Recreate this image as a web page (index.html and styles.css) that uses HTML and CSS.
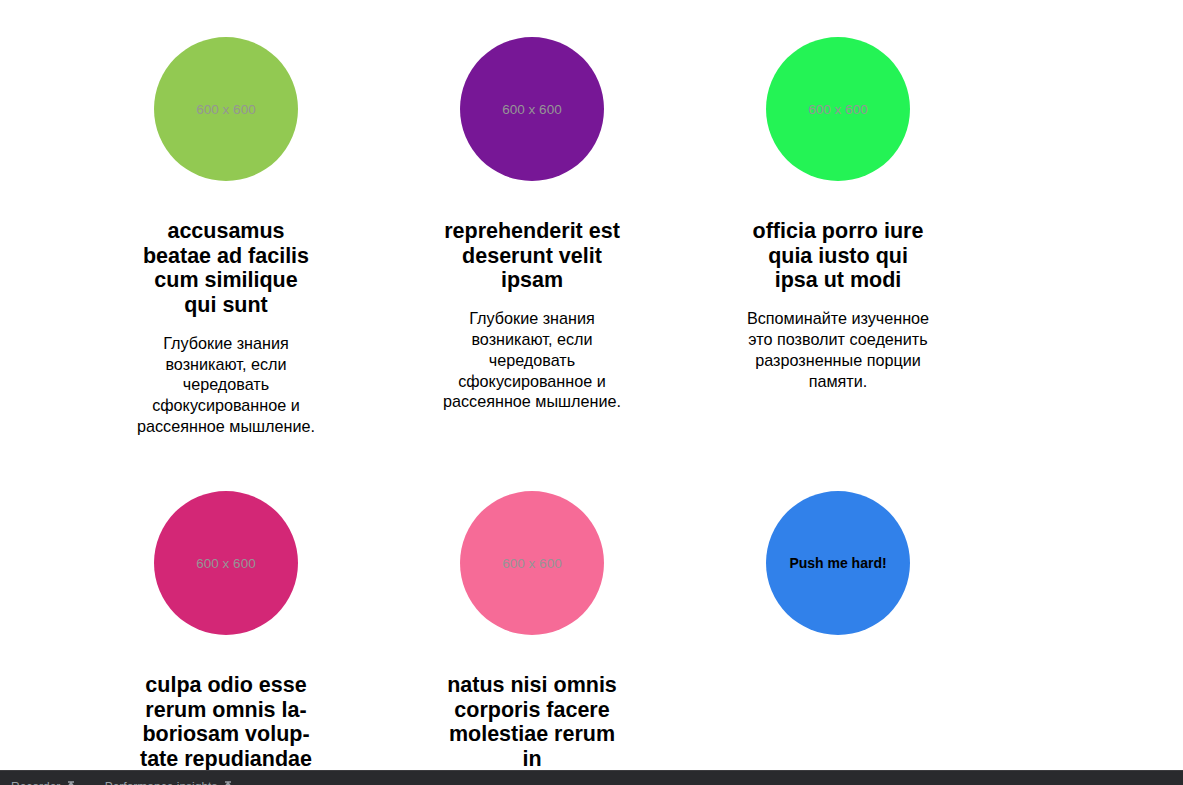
FILE: index.html
```html
<!DOCTYPE html>
<html lang="ru">
<head>
<meta charset="utf-8">
<title>Cards</title>
<link rel="stylesheet" href="styles.css">
</head>
<body>
<main class="grid">
  <article class="card">
    <div class="thumb c1">600 x 600</div>
    <h2 class="title">accusamus beatae ad facilis cum similique qui sunt</h2>
    <p class="text">Глубокие знания возникают, если чередовать сфокусированное и рассеянное мышление.</p>
  </article>
  <article class="card">
    <div class="thumb c2">600 x 600</div>
    <h2 class="title">reprehenderit est deserunt velit ipsam</h2>
    <p class="text">Глубокие знания возникают, если чередовать сфокусированное и рассеянное мышление.</p>
  </article>
  <article class="card">
    <div class="thumb c3">600 x 600</div>
    <h2 class="title">officia porro iure quia iusto qui ipsa ut modi</h2>
    <p class="text">Вспоминайте изученное это позволит соеденить разрозненные порции памяти.</p>
  </article>
  <article class="card">
    <div class="thumb c4">600 x 600</div>
    <h2 class="title">culpa odio esse rerum omnis la&shy;boriosam volup&shy;tate repudiandae</h2>
    <p class="text">Глубокие знания возникают, если чередовать сфокусированное и рассеянное мышление.</p>
  </article>
  <article class="card">
    <div class="thumb c5">600 x 600</div>
    <h2 class="title">natus nisi omnis corporis facere molestiae rerum in</h2>
    <p class="text">Глубокие знания возникают, если чередовать сфокусированное и рассеянное мышление.</p>
  </article>
  <article class="card">
    <button class="thumb push" type="button">Push me hard!</button>
  </article>
</main>
<div class="drawer">
  <span class="tab">Recorder <svg class="pin" width="8" height="10" viewBox="0 0 8 10"><path d="M1 1h6M4 2v8M2 4l2-2 2 2" stroke="#9aa0a6" stroke-width="1.5" fill="none"/></svg></span>
  <span class="tab">Performance insights <svg class="pin" width="8" height="10" viewBox="0 0 8 10"><path d="M1 1h6M4 2v8M2 4l2-2 2 2" stroke="#9aa0a6" stroke-width="1.5" fill="none"/></svg></span>
</div>
</body>
</html>
```

FILE: styles.css
```css
html, body {
  margin: 0;
  padding: 0;
  background: #fff;
}

body {
  font-family: "Liberation Sans", Arial, sans-serif;
  color: #000;
}

.grid {
  display: grid;
  grid-template-columns: repeat(3, 181px);
  column-gap: 125px;
  row-gap: 54px;
  padding: 37px 0 0 135.5px;
  align-items: start;
}

.card {
  display: flex;
  flex-direction: column;
  align-items: center;
  text-align: center;
}

.thumb {
  width: 144px;
  height: 144px;
  border-radius: 50%;
  display: flex;
  align-items: center;
  justify-content: center;
  font-family: "Liberation Sans", Arial, sans-serif;
  font-size: 13.5px;
  color: #959595;
  flex-shrink: 0;
  padding-top: 1px;
  box-sizing: border-box;
}

.c1 { background: #92c952; }
.c2 { background: #771796; }
.c3 { background: #24f355; }
.c4 { background: #d32776; }
.c5 { background: #f66b97; }

.push {
  background: #3181ea;
  border: none;
  padding: 0;
  color: #000;
  font-weight: bold;
  font-size: 14px;
  cursor: pointer;
}

.title {
  margin: 38px 0 0;
  font-size: 21.5px;
  line-height: 24.7px;
  font-weight: bold;
  hyphens: manual;
}

.text {
  margin: 15px -3px 0;
  font-size: 16.2px;
  line-height: 20.8px;
}

.drawer {
  position: fixed;
  left: 0;
  right: 0;
  bottom: 0;
  height: 15px;
  background: #292a2d;
  border-top: 1px solid #3c3c3f;
  overflow: hidden;
  display: flex;
  gap: 30px;
  padding-left: 11px;
  box-sizing: border-box;
}

.tab {
  font-family: "Liberation Sans", Arial, sans-serif;
  font-size: 12px;
  color: #9aa0a6;
  line-height: 12px;
  padding-top: 10px;
  white-space: nowrap;
}

.pin {
  margin-left: 3px;
  vertical-align: top;
}
```
